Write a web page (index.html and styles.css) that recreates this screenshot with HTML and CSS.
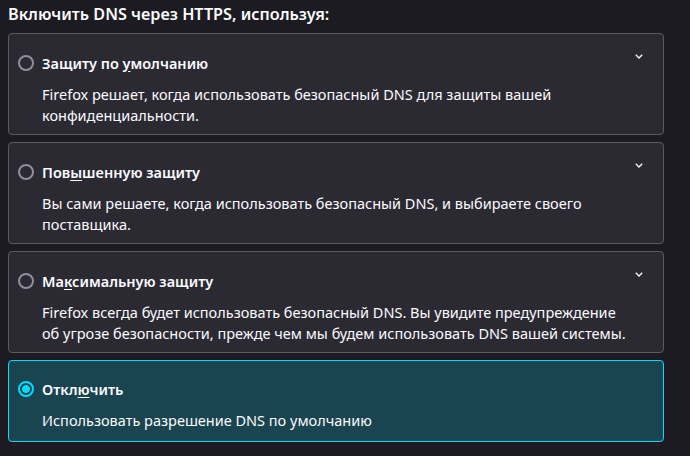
FILE: index.html
```html
<!DOCTYPE html>
<html lang="ru">
<head>
<meta charset="utf-8">
<link rel="stylesheet" href="styles.css">
</head>
<body>
<div class="page">
  <h2 class="title">Включить DNS через HTTPS, используя:</h2>
  <div class="options">
    <div class="card">
      <div class="head">
        <span class="radio"></span>
        <span class="label">Защиту по <u>у</u>молчанию</span>
        <svg class="chev" width="8" height="5" viewBox="0 0 8 5"><path d="M0.8 0.8 L4 4 L7.2 0.8" fill="none" stroke="#fbfbfe" stroke-width="1.3"/></svg>
      </div>
      <p class="desc">Firefox решает, когда использовать безопасный DNS для защиты вашей<br>конфиденциальности.</p>
    </div>
    <div class="card">
      <div class="head">
        <span class="radio"></span>
        <span class="label">Пов<u>ы</u>шенную защиту</span>
        <svg class="chev" width="8" height="5" viewBox="0 0 8 5"><path d="M0.8 0.8 L4 4 L7.2 0.8" fill="none" stroke="#fbfbfe" stroke-width="1.3"/></svg>
      </div>
      <p class="desc">Вы сами решаете, когда использовать безопасный DNS, и выбираете своего<br>поставщика.</p>
    </div>
    <div class="card">
      <div class="head">
        <span class="radio"></span>
        <span class="label">Ма<u>к</u>симальную защиту</span>
        <svg class="chev" width="8" height="5" viewBox="0 0 8 5"><path d="M0.8 0.8 L4 4 L7.2 0.8" fill="none" stroke="#fbfbfe" stroke-width="1.3"/></svg>
      </div>
      <p class="desc">Firefox всегда будет использовать безопасный DNS. Вы увидите предупреждение<br>об угрозе безопасности, прежде чем мы будем использовать DNS вашей системы.</p>
    </div>
    <div class="card selected">
      <div class="head">
        <span class="radio checked"></span>
        <span class="label">Откл<u>ю</u>чить</span>
      </div>
      <p class="desc">Использовать разрешение DNS по умолчанию</p>
    </div>
  </div>
</div>
</body>
</html>
```

FILE: styles.css
```css
html, body {
  margin: 0;
  padding: 0;
  background: #1c1b22;
}
body {
  font-family: "Noto Sans", "Open Sans", sans-serif;
  color: #fbfbfe;
  font-size: 14.5px;
}
.page {
  width: 656px;
  padding: 0 8px;
}
.title {
  margin: 0;
  font-size: 16.2px;
  font-weight: 600;
  line-height: 22px;
  padding-top: 3px;
  height: 30px;
}
.options {
  display: flex;
  flex-direction: column;
  gap: 7px;
}
.card {
  background: #2b2a33;
  border: 1px solid #5b5a63;
  border-radius: 4px;
  padding: 18px 9px 8px 9px;
}
.head {
  display: flex;
  align-items: center;
  height: 22px;
  position: relative;
}
.radio {
  width: 12px;
  height: 12px;
  border: 2px solid #8f8f9d;
  border-radius: 50%;
  flex: none;
  margin-right: 8px;
}
.radio.checked {
  border-color: #00ddff;
  background: radial-gradient(circle, #00ddff 0 3.6px, transparent 4.2px);
}
.label {
  font-weight: 600;
  flex: 1;
}
.label u {
  text-underline-offset: 2px;
}
.chev {
  position: absolute;
  right: 11px;
  top: 2px;
}
.desc {
  margin: 10px 0 0 24px;
  line-height: 21px;
  color: #fbfbfe;
}
.card.selected {
  background: #1a4450;
  border-color: #00ddff;
  padding-top: 17px;
  padding-bottom: 10px;
}
```
